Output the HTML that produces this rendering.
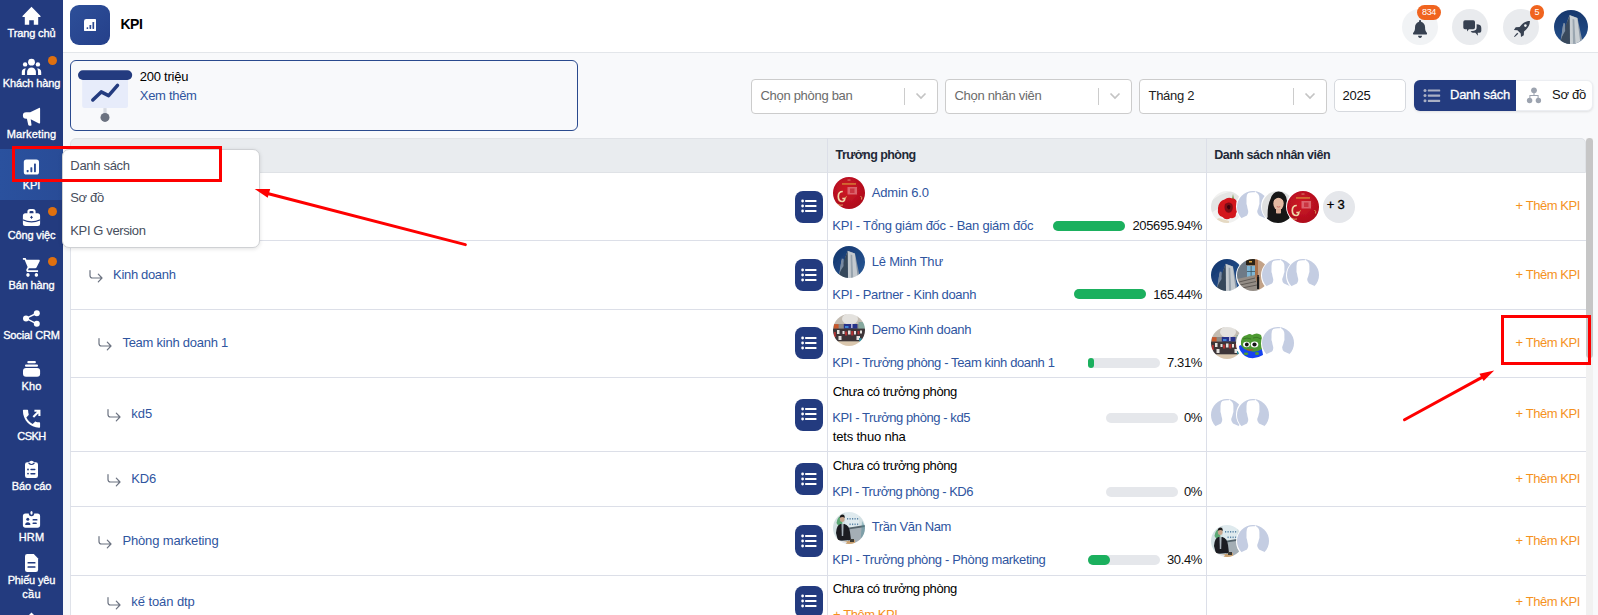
<!DOCTYPE html>
<html lang="vi">
<head>
<meta charset="utf-8">
<title>KPI</title>
<style>
*{box-sizing:border-box;margin:0;padding:0}
html,body{width:1598px;height:615px;overflow:hidden}
body{position:relative;background:#f8f9fb;font-family:"Liberation Sans",sans-serif;font-size:13px;color:#111;letter-spacing:-0.3px}
.abs{position:absolute}
/* sidebar */
#side{position:absolute;left:0;top:0;width:63px;height:615px;background:#233b7f}
.si{position:absolute;left:0;width:63px;text-align:center;color:#fff;font-size:11px;letter-spacing:-0.14px;line-height:14px;white-space:nowrap;-webkit-text-stroke:0.35px #fff}
.si svg{position:absolute;fill:#fff}
.dot{position:absolute;width:9px;height:9px;border-radius:50%;background:#e0700f;left:48px}
#kpiact{position:absolute;left:0;top:149px;width:63px;height:51px;background:linear-gradient(90deg,#2a519e,#294c97)}
/* header */
#hdr{position:absolute;left:63px;top:0;width:1535px;height:53px;background:#fff;border-bottom:1px solid #e3e6ea}
#kpibox{position:absolute;left:70px;top:5px;width:40px;height:40px;border-radius:9px;background:linear-gradient(135deg,#2d4f99,#25408a)}
#kpititle{position:absolute;left:120.5px;top:15px;font-size:14px;font-weight:700;letter-spacing:-0.5px;color:#000;line-height:18px}
.cbtn{position:absolute;top:9px;width:36px;height:36px;border-radius:50%;background:#e9ebee}
.badge{position:absolute;top:5px;height:15px;border-radius:8px;background:#f0641f;color:#fff;font-size:9px;line-height:15px;text-align:center;letter-spacing:-0.4px}
/* banner */
#card{position:absolute;left:70px;top:60px;width:508px;height:71px;border:1px solid #2a4a8e;border-radius:6px;background:#f8f9fb}
/* filters */
.sel{position:absolute;top:79px;width:187px;height:35px;border:1px solid #ccc;border-radius:4px;background:#fff;color:#6b6b6b;font-size:13px;line-height:31px;padding-left:8.500px}
.sel i{position:absolute;right:32px;top:8px;width:1px;height:17px;background:#ccc}
.sel svg{position:absolute;right:10px;top:12px}
/* table */
#thead{position:absolute;left:70px;top:138px;width:1516px;height:35px;background:#e9ecef;border-radius:6px 5px 0 0;border:1px solid #dfe2e6}
.th{position:absolute;top:138px;height:35px;line-height:34px;font-weight:700;font-size:12.5px;letter-spacing:-0.55px;color:#1f2937}
#tbody{position:absolute;left:70px;top:173px;width:1516px;height:442px;background:#fff;border-left:1px solid #dfe2e9}
.hl{position:absolute;left:70px;width:1516px;height:1px;background:#dcdfe8}
.vl{position:absolute;top:138px;width:1px;height:477px;background:#dcdfe8}
.lb{position:absolute;left:795px;width:28px;height:32px;border-radius:8px;background:#233b7f}
.lb svg{position:absolute;left:5.500px;top:8.500px}
.blue{color:#2f559f}
.t{position:absolute;white-space:nowrap;line-height:16px}
.add{position:absolute;left:1515.500px;color:#f5921e;white-space:nowrap;line-height:16px;letter-spacing:-0.42px}
.pb{position:absolute;height:10px;border-radius:5px;background:#e5e7eb;width:72px}
.pb b{position:absolute;left:0;top:0;height:10px;border-radius:5px;background:#1bb05e;display:block}
.pc{position:absolute;right:396px;white-space:nowrap;line-height:16px;color:#111;letter-spacing:-0.35px}
.av{position:absolute;width:32px;height:32px;border-radius:50%;overflow:hidden}
.arr{position:absolute}
/* dropdown */
#menu{position:absolute;left:62px;top:149px;width:198px;height:99px;background:#fff;border:1px solid #cfd1d4;border-radius:7px;box-shadow:0 1px 4px rgba(0,0,0,.12)}
#menu div{position:absolute;left:7.300px;color:#474e5d;font-size:13px;line-height:16px;white-space:nowrap}
.red{position:absolute;border:3px solid #fe0000}
</style>
</head>
<body>
<!-- header -->
<div id="hdr"></div>
<div id="kpibox"></div>
<svg class="abs" style="left:83.600px;top:18.500px" width="12.800" height="12.800" viewBox="0 0 13 13"><rect x="0" y="0" width="13" height="13" rx="2.200" fill="#fff"/><g fill="#2a4890"><rect x="2.600" y="8.300" width="1.700" height="1.900" rx=".5"/><rect x="5.600" y="6" width="1.700" height="4.200" rx=".5"/><rect x="8.600" y="3" width="1.700" height="7.200" rx=".5"/></g></svg>
<div id="kpititle">KPI</div>
<div class="cbtn" style="left:1402px;background:#f1f3f5"></div>
<div class="cbtn" style="left:1452px"></div>
<div class="cbtn" style="left:1503px"></div>
<!-- bell -->
<svg class="abs" style="left:1413px;top:20.100px" width="14.100" height="17.900" viewBox="0 0 448 512" preserveAspectRatio="none"><path fill="#374151" d="M224 0c-17.700 0-32 14.300-32 32V51.200C119 66 64 130.600 64 208v18.800c0 47-17.300 92.400-48.500 127.600l-7.400 8.300c-8.400 9.400-10.400 22.900-5.300 34.400S19.400 416 32 416H416c12.600 0 24-7.400 29.200-18.900s3.100-25-5.300-34.400l-7.400-8.300C401.300 319.200 384 273.900 384 226.800V208c0-77.400-55-142-128-156.800V32c0-17.700-14.300-32-32-32zm45.300 493.300c12-12 18.700-28.300 18.700-45.300H224 160c0 17 6.700 33.300 18.700 45.300s28.300 18.700 45.300 18.700s33.300-6.700 45.300-18.700z"/></svg>
<!-- chat -->
<svg class="abs" style="left:1462px;top:19px" width="21" height="18" viewBox="0 0 21 18"><g fill="#374151"><path d="M3 1.300 H11.300 Q13 1.300 13 3 V8.500 Q13 10.200 11.300 10.200 H6.800 L5.300 12.500 L4.900 10.200 H3 Q1.300 10.200 1.300 8.500 V3 Q1.300 1.300 3 1.300 Z"/><path d="M14.600 5.200 Q16.600 5.200 18.300 6.300 Q19.300 7.200 19.300 9 V12 Q19.300 13.800 17.600 13.800 H15.700 L16 16.800 L13.300 13.800 H10.800 Q9.300 13.600 8.600 12.300 Q12.800 12.200 14 10.800 Q14.900 9.800 14.600 5.200 Z"/></g></svg>
<!-- rocket -->
<svg class="abs" style="left:1512px;top:19px" width="20" height="20" viewBox="0 0 20 20"><g fill="#374151"><path d="M17.900 2.100 C15 1.900 11.500 3.400 9.300 6 L7.600 8 L3.700 8.200 L1.900 11 L5.400 11.300 L8.700 14.600 L9 18.100 L11.800 16.300 L12 12.400 L14 10.700 C16.600 8.500 18.100 5 17.900 2.100 Z"/><path d="M2 17.500 L5.200 13.700 L6.300 14.800 L2.700 18.100 Z" /></g><circle cx="13.400" cy="6.600" r="1.300" fill="#f1f3f5"/></svg>
<div class="badge" style="left:1417px;width:24px">834</div>
<div class="badge" style="left:1529.500px;width:14.500px">5</div>
<!-- user avatar -->
<svg class="abs" style="left:1554px;top:10px" width="34" height="34" viewBox="0 0 34 34"><defs><clipPath id="ua"><circle cx="17" cy="17" r="17"/></clipPath><linearGradient id="sky" x1="0" y1="0" x2="0" y2="1"><stop offset="0" stop-color="#16376c"/><stop offset="1" stop-color="#234f8b"/></linearGradient></defs><g clip-path="url(#ua)"><rect width="34" height="34" fill="url(#sky)"/><path d="M6 34 L9.500 13 L11 13.500 L11.500 21 L13 12 L15.500 5 L23.500 8 L29 34 Z" fill="#8a97a6"/><path d="M16 34 L15.800 5.200 L23.300 8 L26.500 34 Z" fill="#c9cfd3"/><path d="M5.500 34 L13 12 L15.600 6 L16 34 Z" fill="#39495c"/><path d="M8.800 16 L10.800 13.300 L11.200 21 L7.500 27 Z" fill="#7d8fa6"/><path d="M19 34 L18.600 9 L20.300 9.600 L21.500 34 Z" fill="#9aa6b0"/></g></svg>

<!-- banner card -->
<div id="card"></div>
<svg class="abs" style="left:70px;top:60px" width="80" height="70" viewBox="70 60 80 70"><path d="M82.200 78 H128 V105.600 Q128 108.100 125.500 108.100 H84.700 Q82.200 108.100 82.200 105.600 Z" fill="#e7ecfa"/><rect x="78" y="70.200" width="54.200" height="9.800" rx="4.900" fill="#233b7f"/><path d="M92.800 100 L101.200 91.900 L108.600 95.600 L117.500 85.400" fill="none" stroke="#233b7f" stroke-width="3.500" stroke-linecap="round" stroke-linejoin="round"/><rect x="103.400" y="108.100" width="3.200" height="6" fill="#d6dae1"/><circle cx="105" cy="117.400" r="4.500" fill="#6b7280"/></svg>
<div class="t" style="left:139.800px;top:68.500px;color:#000;letter-spacing:-0.250px">200 triệu</div>
<div class="t blue" style="left:139.800px;top:87.700px;letter-spacing:-0.300px">Xem thêm</div>

<!-- filters -->
<div class="sel" style="left:751px">Chọn phòng ban<i></i><svg width="12" height="8" viewBox="0 0 12 8"><path d="M1.500 1.500 L6 6 L10.500 1.500" fill="none" stroke="#c4c4c4" stroke-width="1.700"/></svg></div>
<div class="sel" style="left:945px">Chọn nhân viên<i></i><svg width="12" height="8" viewBox="0 0 12 8"><path d="M1.500 1.500 L6 6 L10.500 1.500" fill="none" stroke="#c4c4c4" stroke-width="1.700"/></svg></div>
<div class="sel" style="left:1139px;width:188px;color:#222">Tháng 2<i></i><svg width="12" height="8" viewBox="0 0 12 8"><path d="M1.500 1.500 L6 6 L10.500 1.500" fill="none" stroke="#c4c4c4" stroke-width="1.700"/></svg></div>
<div class="abs" style="left:1334px;top:79px;width:72px;height:33px;border:1px solid #d6d9de;border-radius:5px;background:#fff;color:#111;line-height:32px;padding-left:7.500px;letter-spacing:-0.200px">2025</div>
<div class="abs" style="left:1414px;top:80px;width:179px;height:31px;border:1px solid #eceef2;border-radius:6px;background:#fff;box-shadow:0 1px 2.500px rgba(0,0,0,.10)"></div>
<div class="abs" style="left:1414px;top:80px;width:102px;height:31px;border-radius:6px 0 0 6px;background:#233b7f"></div>
<svg class="abs" style="left:1423px;top:88px" width="18" height="15" viewBox="0 0 18 15"><g fill="#aab0c4"><circle cx="2" cy="2.400" r="1.500"/><circle cx="2" cy="7.600" r="1.500"/><circle cx="2" cy="12.800" r="1.500"/><rect x="4.800" y="1.400" width="12.400" height="2.100" rx=".6"/><rect x="4.800" y="6.600" width="12.400" height="2.100" rx=".6"/><rect x="4.800" y="11.800" width="12.400" height="2.100" rx=".6"/></g></svg>
<div class="t" style="left:1450px;top:86.500px;color:#fff;-webkit-text-stroke:0.300px #fff;letter-spacing:-0.250px">Danh sách</div>
<svg class="abs" style="left:1526px;top:87px" width="16" height="17" viewBox="0 0 16 17"><g fill="#9ca3af"><circle cx="8" cy="3.300" r="2.900"/><circle cx="3.600" cy="13.500" r="2.700"/><circle cx="12.400" cy="13.500" r="2.700"/><path d="M7.500 6 H8.500 V8 H12.600 V11 H11.600 V9 H4.400 V11 H3.400 V8 H7.500 Z"/></g></svg>
<div class="t" style="left:1552px;top:86.500px;color:#111;letter-spacing:-0.250px">Sơ đồ</div>

<!-- sidebar -->
<div id="side"></div>
<div id="kpiact"></div>
<svg class="abs" style="left:0;top:0" width="63" height="615" viewBox="0 0 63 615">
<g fill="#fff">
<!-- home -->
<path d="M31.5 6.7 L40.5 16.1 V17.1 H38.2 V24.8 H33.8 V20.2 H29.2 V24.8 H24.8 V17.1 H22.5 V16.1 Z"/>
<!-- users -->
<circle cx="31.5" cy="62.2" r="3.4"/><circle cx="25.1" cy="64.4" r="2.2"/><circle cx="37.9" cy="64.4" r="2.2"/>
<path d="M27.1 75 V71.8 A4.4 4.4 0 0 1 35.9 71.8 V75 Z"/>
<path d="M21.8 75 V72 Q21.9 68.6 25.7 68.2 Q24.8 70 24.9 75 Z"/>
<path d="M41.2 75 V72 Q41.1 68.6 37.3 68.2 Q38.2 70 38.1 75 Z"/>
<!-- bullhorn -->
<path d="M40.1 108.7 Q40.1 107.5 39 108 L30.2 112.2 H26.2 A3.3 3.3 0 0 0 26.2 118.8 H26.9 L28.2 124.7 Q28.5 125.8 29.6 125.8 H30.6 Q31.7 125.8 31.5 124.7 L30.7 119.2 L39 123.4 Q40.1 123.9 40.1 122.8 Z"/>
<!-- kpi -->
<rect x="23.8" y="159.4" width="15.2" height="15.2" rx="2.6"/>
<!-- briefcase -->
<path d="M27.4 213.2 V211.6 Q27.4 208.9 30.1 208.9 H32.9 Q35.6 208.9 35.6 211.6 V213.2 H37.6 Q40.1 213.2 40.1 215.7 V223.4 Q40.1 225.9 37.6 225.9 H25.4 Q22.9 225.9 22.9 223.4 V215.7 Q22.9 213.2 25.4 213.2 Z M29.5 213.2 H33.5 V211.9 Q33.5 210.9 32.5 210.9 H30.5 Q29.5 210.9 29.5 211.9 Z"/>
<!-- cart -->
<g transform="translate(22.06,256) scale(0.843,0.945)"><path d="M7 18c-1.1 0-1.99.9-1.99 2S5.9 22 7 22s2-.9 2-2-.9-2-2-2zM1 2v2h2l3.6 7.59-1.35 2.45c-.16.28-.25.61-.25.96 0 1.1.9 2 2 2h12v-2H7.42c-.14 0-.25-.11-.25-.25l.03-.12.9-1.63h7.45c.75 0 1.41-.41 1.75-1.03l3.58-6.49c.08-.14.12-.31.12-.48 0-.55-.45-1-1-1H5.21l-.94-2H1zm16 16c-1.1 0-1.99.9-1.99 2s.89 2 1.99 2 2-.9 2-2-.9-2-2-2z"/></g>
<!-- share -->
<circle cx="26" cy="318.4" r="3"/><circle cx="36.8" cy="313.2" r="3"/><circle cx="36.8" cy="323.8" r="3"/>
<path d="M26 318.4 L36.8 313.2 M26 318.4 L36.8 323.8" stroke="#fff" stroke-width="1.5" fill="none"/>
<!-- kho -->
<rect x="27.3" y="361.1" width="8.6" height="2.1" rx="1"/><rect x="25" y="364.5" width="13" height="2.3" rx="1.1"/><rect x="23" y="367.9" width="17.1" height="8.9" rx="3"/>
<!-- phone -->
<g transform="translate(20.03,406.8) scale(0.955,0.994)"><path d="M20 15.5c-1.25 0-2.45-.2-3.57-.57-.35-.11-.74-.03-1.02.24l-2.2 2.2c-2.83-1.44-5.15-3.75-6.59-6.59l2.2-2.21c.28-.26.36-.65.25-1C8.7 6.45 8.5 5.25 8.5 4c0-.55-.45-1-1-1H4c-.55 0-1 .45-1 1 0 9.390 7.610 17 17 17 .55 0 1-.45 1-1v-3.500c0-.55-.45-1-1-1z"/></g>
<path d="M33.300 417 L39 411.200 M34.400 410.800 H39.400 V416" stroke="#fff" stroke-width="2.100" fill="none"/>
<!-- clipboard -->
<path d="M27.2 462.3 H29 Q29.3 460.7 31.5 460.7 Q33.7 460.7 34 462.3 H35.8 Q38 462.3 38 464.5 V475.8 Q38 478 35.8 478 H27.2 Q25 478 25 475.8 V464.5 Q25 462.3 27.2 462.3 Z"/>
<!-- hrm -->
<rect x="22.9" y="513.4" width="17.2" height="14.3" rx="2.6"/>
<!-- file -->
<path d="M27.2 554 H33.8 L38.1 558.6 V569.8 Q38.1 572 35.9 572 H27.2 Q25 572 25 569.8 V556.2 Q25 554 27.2 554 Z"/>
<!-- next icon tip -->
<path d="M31.5 612.6 L34 615 H29 Z"/>
</g>
<g fill="#233b7f">
<!-- kpi bars -->
<g fill="#2b4b95"><rect x="26.7" y="170" width="1.9" height="2.2" rx=".6"/><rect x="30.4" y="167.2" width="1.9" height="5" rx=".6"/><rect x="34" y="163.4" width="1.9" height="8.8" rx=".6"/></g>
<!-- briefcase details -->
<path d="M22.9 219.2 Q31.5 223.4 40.1 219.2 V220.5 Q31.5 224.7 22.9 220.500 Z"/>
<path d="M31.5 215.900 V218.700 M30.100 217.300 H32.900" stroke="#233b7f" stroke-width="1" fill="none"/>
<!-- clipboard details -->
<path d="M28.6 463 Q31.5 466 34.4 463" stroke="#233b7f" stroke-width="1.1" fill="none"/>
<rect x="29.900" y="461.700" width="3.200" height="1.200" rx=".6" fill="#233b7f" opacity="0"/>
<circle cx="28" cy="469.500" r=".9"/><rect x="30.300" y="468.800" width="5.200" height="1.500" rx=".7"/>
<circle cx="28" cy="473.600" r=".9"/><rect x="30.300" y="472.900" width="5.200" height="1.500" rx=".7"/>
<!-- hrm details -->
<circle cx="31.500" cy="513.600" r="2.700"/>
<circle cx="27.800" cy="519.300" r="1.500"/><path d="M25.200 525 Q25.200 522.300 27.800 522.300 Q30.400 522.300 30.400 525 Z"/>
<rect x="32.500" y="519.100" width="5" height="1.500" rx=".7"/><rect x="32.500" y="522.600" width="4.300" height="1.500" rx=".7"/>
<!-- file details -->
<rect x="27.500" y="562" width="8" height="1.500" rx=".5"/><rect x="27.500" y="566.300" width="8" height="1.500" rx=".5"/>
</g>
<ellipse cx="31.500" cy="512.800" rx="1.100" ry="1.900" fill="#fff"/>
</svg>
<div class="dot" style="top:56px"></div>
<div class="dot" style="top:207px"></div>
<div class="dot" style="top:257px"></div>
<div class="si" style="top:26px">Trang chủ</div>
<div class="si" style="top:76px">Khách hàng</div>
<div class="si" style="top:127px;letter-spacing:.15px">Marketing</div>
<div class="si" style="top:178px">KPI</div>
<div class="si" style="top:227.500px">Công việc</div>
<div class="si" style="top:278px">Bán hàng</div>
<div class="si" style="top:328px">Social CRM</div>
<div class="si" style="top:379px;letter-spacing:.2px">Kho</div>
<div class="si" style="top:429px;letter-spacing:-0.500px">CSKH</div>
<div class="si" style="top:479px">Báo cáo</div>
<div class="si" style="top:530px;letter-spacing:.2px">HRM</div>
<div class="si" style="top:573px">Phiếu yêu</div>
<div class="si" style="top:587.300px;letter-spacing:.3px">cầu</div>

<!-- table -->
<svg width="0" height="0" style="position:absolute">
<defs>
<clipPath id="c32"><circle cx="16" cy="16" r="16"/></clipPath>
<filter id="bl" x="-10%" y="-10%" width="120%" height="120%"><feGaussianBlur stdDeviation="0.45"/></filter>
<radialGradient id="rg" cx=".45" cy=".4" r=".7"><stop offset="0" stop-color="#cf1626"/><stop offset="1" stop-color="#a90d1b"/></radialGradient>
<linearGradient id="sk2" x1="0" y1="0" x2="1" y2="1"><stop offset="0" stop-color="#12336a"/><stop offset="1" stop-color="#2a5a98"/></linearGradient>
<symbol id="a-red" viewBox="0 0 32 32"><g clip-path="url(#c32)"><g filter="url(#bl)"><rect width="32" height="32" fill="url(#rg)"/>
<rect x="9" y="6.300" width="14" height="1.300" fill="#d9a13c" opacity=".85"/><rect x="14.500" y="2.600" width="3" height=".9" fill="#e8c9a0" opacity=".7"/>
<rect x="14.500" y="10" width="9.500" height="7.500" fill="#e27f86" opacity=".75"/><rect x="17" y="11.500" width="4.500" height="4.500" fill="#c62a37" opacity=".8"/>
<path d="M9.800 14.500 Q5.300 14.500 5.300 19.500 Q5.300 24.500 9.500 24.500 Q11.500 24.500 11.800 21.500 H9.300" fill="none" stroke="#f0d9a8" stroke-width="1.700"/>
<path d="M11.500 21 L14 19.500 M27.500 19 Q29.500 20.500 28.500 22.500 M4 27 Q7 29 10 28" stroke="#e5b96a" stroke-width="1" fill="none" opacity=".8"/></g></g></symbol>
<symbol id="a-bld" viewBox="0 0 32 32"><g clip-path="url(#c32)"><g filter="url(#bl)"><rect width="32" height="32" fill="url(#sk2)"/>
<path d="M5.500 32 L8.800 12.500 L10.400 13 L10.800 20 L12.500 11 L14.600 4.800 L22 7.600 L27 32 Z" fill="#8795a5"/><path d="M15 32 L14.800 5 L21.800 7.600 L24.800 32 Z" fill="#c4cacf"/><path d="M5 32 L12.200 11.500 L14.600 5.600 L15 32 Z" fill="#34465a"/><path d="M8.200 15 L10.200 12.600 L10.600 20 L7 25.500 Z" fill="#7889a0"/><path d="M18 32 L17.600 8.500 L19.200 9 L20.200 32 Z" fill="#98a4ae"/></g></g></symbol>
<symbol id="a-grp" viewBox="0 0 32 32"><g clip-path="url(#c32)"><g filter="url(#bl)"><rect width="32" height="32" fill="#cbc5bc"/>
<rect x="0" y="0" width="32" height="10.500" fill="#c3bcb2"/><ellipse cx="17" cy="5" rx="8" ry="5.500" fill="#ecebe9" opacity=".8"/>
<rect x="0" y="10" width="32" height="5" fill="#8f8b86"/><rect x="10.800" y="10" width="13.600" height="4.800" fill="#26308a"/><rect x="12" y="12" width="3.500" height="2" fill="#3f86d6"/><rect x="18" y="9" width="1.600" height="5" fill="#d9d4e6" opacity=".8"/><rect x=".8" y="10.200" width="4.800" height="4.600" fill="#c9582b"/><rect x="25.500" y="8" width="6.500" height="7" fill="#86a89e"/>
<rect x="0" y="14.600" width="32" height="13" fill="#3d3638"/>
<g fill="#e6e3e0"><rect x="4" y="16" width="2.500" height="4"/><rect x="9.500" y="17" width="2" height="3"/><rect x="15" y="16.500" width="2.500" height="4"/><rect x="21" y="17" width="2" height="3.500"/><rect x="5.500" y="22" width="3" height="4"/><rect x="23.500" y="22" width="3.500" height="4"/><rect x="27" y="16.500" width="2" height="3"/></g>
<g fill="#b03030"><rect x="12" y="17.500" width="2.200" height="4"/><rect x="18.200" y="17" width="2.200" height="4.500"/><rect x="24.500" y="17" width="2" height="3.500"/><rect x="1" y="18" width="1.800" height="5"/></g>
<rect x="26" y="24" width="2.500" height="3.500" fill="#2d8a9a"/>
<rect x="0" y="27.500" width="32" height="4.500" fill="#dac7ae"/></g></g></symbol>
<symbol id="a-nam" viewBox="0 0 32 32"><g clip-path="url(#c32)"><g filter="url(#bl)"><rect width="32" height="32" fill="#d3e0e3"/>
<rect x="12" y="0" width="14" height="15" fill="#dfeaee"/><g fill="#5d86a8"><rect x="14" y="6" width="1.200" height="1.600"/><rect x="16.500" y="6" width="1.200" height="1.600"/><rect x="19" y="6" width="1.200" height="1.600"/><rect x="21.500" y="6" width="1.200" height="1.600"/><rect x="24" y="6" width="1.200" height="1.600"/><rect x="16.500" y="11.500" width="1.200" height="1.600"/><rect x="19" y="11.500" width="1.200" height="1.600"/><rect x="21.500" y="11.500" width="1.200" height="1.600"/><rect x="24" y="11.500" width="1.200" height="1.600"/></g>
<path d="M3.500 11 Q4.500 4.500 8 4 L9.500 11.500 L5.500 14 Z" fill="#3f9a58" opacity=".8"/>
<path d="M15 16.500 L32 13.500 V32 H15 Z" fill="#a4aeb5"/><path d="M15 15.800 L32 13 V15 L15 17.500 Z" fill="#55646c"/>
<path d="M29 9 L32 14 V30 H27.500 Z" fill="#4f8f98" opacity=".45"/>
<ellipse cx="9.200" cy="7" rx="2.400" ry="3" fill="#c9a58c"/><path d="M6.700 5.800 Q7 2.500 9.500 2.500 Q12 2.700 11.700 6 Q10 4.300 6.700 5.800 Z" fill="#1c1a1c"/>
<path d="M3 21 Q3.500 13 7.500 12 L11.500 12 Q16 13 17 20 L18 28 L5 29 Z" fill="#1b1d24"/><path d="M8.500 12 L10.600 12 L10.200 24 L8.800 24 Z" fill="#a8b0b8"/>
<path d="M0 24 L8 30 L22 28 L22 34 L0 34 Z" fill="#c9a070"/><path d="M4 28 L14 30 L12 33 L2 31 Z" fill="#e3e8ee"/><rect x="17" y="27" width="4" height="3" fill="#3c3a36"/></g></g></symbol>
<symbol id="a-rose" viewBox="0 0 32 32"><g clip-path="url(#c32)"><g filter="url(#bl)"><rect width="32" height="32" fill="#f1f1f0"/>
<path d="M0 10 Q10 2 22 0 L32 0 V8 Q18 10 0 22 Z" fill="#e4e5e4"/><path d="M6 32 Q4 28 8 27 L18 30 V32 Z" fill="#e2d3b8" opacity=".8"/>
<path d="M21 9 L22 3 L23 9 Z" fill="#5d8a32"/>
<path d="M7 17 Q8 9.500 13.500 8.500 Q17 5.500 21.500 7.500 Q26 7.500 26 13 Q28 18.500 25 22.500 Q25 28 19.500 27 Q15 30 11.500 26 Q6 25 7 17 Z" fill="#d3121d"/>
<path d="M14 13 Q18 10 21 13 Q23 17 20 21 Q16 23 14 19 Q13 16 14 13 Z" fill="#7e0a12"/><path d="M16 15 Q18 13 19.500 15.500 Q19.500 18 17.500 18.500 Q15.500 17.500 16 15 Z" fill="#3e0508"/></g></g></symbol>
<symbol id="a-girl" viewBox="0 0 32 32"><g clip-path="url(#c32)"><g filter="url(#bl)"><rect width="32" height="32" fill="#dfe0e0"/>
<path d="M6 32 Q4.500 16 8.500 8 Q11 0 17 .5 Q24 1 25 10 Q27.500 20 27 32 Z" fill="#141314"/>
<ellipse cx="16.500" cy="12.500" rx="5.200" ry="6.600" fill="#e3b9a2"/><path d="M10.600 11 Q11.500 4 17 4.500 Q22 5 22.300 11 Q19 6 15 7 Q12 8 10.600 11 Z" fill="#141314"/>
<rect x="14" y="18" width="5" height="4.500" fill="#dcae97"/><path d="M14.800 15.600 Q16.500 16.600 18.200 15.600" stroke="#c4655f" stroke-width=".9" fill="none"/>
<path d="M3 32 Q5 23 13.500 22 Q16.500 24.500 19.500 22 Q28 23 30 32 Z" fill="#161517"/></g></g></symbol>
<symbol id="a-stair" viewBox="0 0 32 32"><g clip-path="url(#c32)"><g filter="url(#bl)"><rect width="32" height="32" fill="#8f8479"/>
<rect x="0" y="0" width="11" height="20" fill="#6e7a86"/><rect x="9" y="0" width="9" height="6" fill="#2c2118"/><rect x="12" y="2" width="3" height="1.500" fill="#d9a441"/>
<rect x="10" y="7" width="8" height="11" fill="#7fb7d6"/><rect x="13.700" y="7" width=".8" height="11" fill="#3d5563"/><rect x="10" y="12" width="8" height=".8" fill="#3d5563"/>
<rect x="18" y="0" width="3" height="24" fill="#a9714b"/><rect x="21" y="0" width="11" height="32" fill="#c2a288"/>
<path d="M0 20 L18 16 L22 32 L0 32 Z" fill="#948d86"/><path d="M2 23 L18 19 M3 26 L19 22.500 M5 29 L20 26" stroke="#5f5a55" stroke-width="1"/>
<rect x="20" y="18" width="2.200" height="12" fill="#1d1a1b"/><circle cx="21.100" cy="17" r="1.100" fill="#2a2224"/></g></g></symbol>
<symbol id="a-pepe" viewBox="0 0 32 32"><g clip-path="url(#c32)"><g filter="url(#bl)"><rect width="32" height="32" fill="#fff"/>
<path d="M2 19 Q2 24 8 29 Q16 34 26 28 L25 22 L14 24 L4 18 Z" fill="#1342f0"/>
<path d="M4 18 Q3 9 10 8 Q13 6 15 8 Q20 5 24 8 Q26 13 25 22 Q19 26 13 24 Q6 23 4 18 Z" fill="#4e9a33"/>
<path d="M6 12 Q10 10 14 12 M16 11 Q20 9 24 12" stroke="#3a7a25" stroke-width="1" fill="none"/>
<ellipse cx="9.500" cy="17.500" rx="3.400" ry="2.800" fill="#fff"/><ellipse cx="17.500" cy="17.500" rx="3.800" ry="3" fill="#fff"/>
<circle cx="9.800" cy="17.500" r="1.900" fill="#151515"/><circle cx="17.500" cy="17.500" r="2.100" fill="#151515"/>
<path d="M10 22.500 Q13 24 16 22.500" stroke="#b8452b" stroke-width="1.100" fill="none"/>
<ellipse cx="9" cy="26.800" rx="2.300" ry="1.400" fill="#4e9a33"/><ellipse cx="20" cy="26.600" rx="2" ry="1.500" fill="#4e9a33"/></g></g></symbol>
<symbol id="a-ph" viewBox="0 0 32 32"><g clip-path="url(#c32)"><rect width="32" height="32" fill="#fff"/><rect width="32" height="27.300" fill="#c4cde2"/>
<path d="M11.300 2 Q9.500 3.200 9.500 7 V11.300 Q9.200 13 10 14.600 Q10.400 17.500 11.200 20 Q11.600 22.600 10 24.600 L4.200 27.300 L0 27.300 V32 H32 V27.300 L28.200 27.300 L22 24.600 Q20 22.600 20.200 20 Q21.500 17 21.900 14.600 Q22.700 13 22.400 11.300 V7 Q22.400 3 19.300 1.500 L18.600 0 L17.800 1.300 Q14 .9 11.300 2 Z" fill="#fff"/></g></symbol>
<symbol id="i-list" viewBox="0 0 16 14"><g fill="#fff"><circle cx="1.600" cy="2" r="1.400"/><circle cx="1.600" cy="7" r="1.400"/><circle cx="1.600" cy="12" r="1.400"/><rect x="4" y="1" width="11.600" height="2" rx=".8"/><rect x="4" y="6" width="11.600" height="2" rx=".8"/><rect x="4" y="11" width="11.600" height="2" rx=".8"/></g></symbol>
<symbol id="i-sub" viewBox="0 0 14 13"><path d="M1 .6 V5.500 Q1 8 3.500 8 H12.600 M9.300 4.200 L13 8 L9.300 11.800" fill="none" stroke="#6b7280" stroke-width="1.200" stroke-linecap="round" stroke-linejoin="round"/></symbol>
</defs></svg>

<div id="thead"></div>
<div id="tbody"></div>
<div class="hl" style="top:240px"></div>
<div class="hl" style="top:309px"></div>
<div class="hl" style="top:377px"></div>
<div class="hl" style="top:451px"></div>
<div class="hl" style="top:506px"></div>
<div class="hl" style="top:575px"></div>
<div class="vl" style="left:827px"></div><div class="vl" style="left:1206px"></div>
<div class="th" style="left:835.500px">Trưởng phòng</div><div class="th" style="left:1214.200px;letter-spacing:-0.480px">Danh sách nhân viên</div>
<div class="lb" style="top:190.7px"><svg width="16" height="14"><use href="#i-list"/></svg></div>
<svg class="abs" style="left:833px;top:177px" width="32" height="32"><use href="#a-red"/></svg>
<div class="t blue" style="left:871.700px;top:184.7px;letter-spacing:-0.162px">Admin 6.0</div>
<div class="t blue" style="left:832.300px;top:218.2px;letter-spacing:-0.248px">KPI - Tổng giám đốc - Ban giám đốc</div>
<div class="pb" style="left:1053px;top:220.8px"><b style="width:72px"></b></div>
<div class="pc" style="top:218.2px">205695.94%</div>
<svg class="abs" style="left:1211px;top:190.8px" width="32" height="32"><use href="#a-rose"/></svg>
<div class="abs" style="left:1235.5px;top:189.3px;width:35px;height:35px;border-radius:50%;background:#fff"></div><svg class="abs" style="left:1237px;top:190.8px" width="32" height="32"><use href="#a-ph"/></svg>
<div class="abs" style="left:1260.5px;top:189.3px;width:35px;height:35px;border-radius:50%;background:#fff"></div><svg class="abs" style="left:1262px;top:190.8px" width="32" height="32"><use href="#a-girl"/></svg>
<div class="abs" style="left:1285.5px;top:189.3px;width:35px;height:35px;border-radius:50%;background:#fff"></div><svg class="abs" style="left:1287px;top:190.8px" width="32" height="32"><use href="#a-red"/></svg>
<div class="abs" style="left:1323px;top:190.5px;width:32px;height:32px;border-radius:50%;background:#e5e7eb;text-align:left;padding-left:3.800px;line-height:27.500px;font-size:13px;color:#000;-webkit-text-stroke:0.300px #000;letter-spacing:-0.300px">+ 3</div>
<div class="add" style="top:197.5px">+ Thêm KPI</div>
<div class="lb" style="top:259px"><svg width="16" height="14"><use href="#i-list"/></svg></div>
<svg class="abs" style="left:88.8px;top:270px" width="14" height="13"><use href="#i-sub"/></svg>
<div class="t blue" style="left:113.1px;top:266.5px;letter-spacing:-0.330px">Kinh doanh</div>
<svg class="abs" style="left:833px;top:246px" width="32" height="32"><use href="#a-bld"/></svg>
<div class="t blue" style="left:871.700px;top:253.7px;letter-spacing:-0.210px">Lê Minh Thư</div>
<div class="t blue" style="left:832.300px;top:287.3px;letter-spacing:-0.336px">KPI - Partner - Kinh doanh</div>
<div class="pb" style="left:1073.8px;top:289px"><b style="width:72px"></b></div>
<div class="pc" style="top:287.3px">165.44%</div>
<svg class="abs" style="left:1211px;top:259px" width="32" height="32"><use href="#a-bld"/></svg>
<div class="abs" style="left:1235.5px;top:257.5px;width:35px;height:35px;border-radius:50%;background:#fff"></div><svg class="abs" style="left:1237px;top:259px" width="32" height="32"><use href="#a-stair"/></svg>
<div class="abs" style="left:1260.5px;top:257.5px;width:35px;height:35px;border-radius:50%;background:#fff"></div><svg class="abs" style="left:1262px;top:259px" width="32" height="32"><use href="#a-ph"/></svg>
<div class="abs" style="left:1285.5px;top:257.5px;width:35px;height:35px;border-radius:50%;background:#fff"></div><svg class="abs" style="left:1287px;top:259px" width="32" height="32"><use href="#a-ph"/></svg>
<div class="add" style="top:266.8px">+ Thêm KPI</div>
<div class="lb" style="top:327.4px"><svg width="16" height="14"><use href="#i-list"/></svg></div>
<svg class="abs" style="left:98.1px;top:338px" width="14" height="13"><use href="#i-sub"/></svg>
<div class="t blue" style="left:122.39999999999999px;top:334.5px;letter-spacing:-0.250px">Team kinh doanh 1</div>
<svg class="abs" style="left:833px;top:314px" width="32" height="32"><use href="#a-grp"/></svg>
<div class="t blue" style="left:871.700px;top:322.2px;letter-spacing:-0.307px">Demo Kinh doanh</div>
<div class="t blue" style="left:832.300px;top:355px;letter-spacing:-0.381px">KPI - Trưởng phòng - Team kinh doanh 1</div>
<div class="pb" style="left:1087.7px;top:358px"><b style="width:6.5px"></b></div>
<div class="pc" style="top:355px">7.31%</div>
<svg class="abs" style="left:1211px;top:327px" width="32" height="32"><use href="#a-grp"/></svg>
<div class="abs" style="left:1235.5px;top:325.5px;width:35px;height:35px;border-radius:50%;background:#fff"></div><svg class="abs" style="left:1237px;top:327px" width="32" height="32"><use href="#a-pepe"/></svg>
<div class="abs" style="left:1260.5px;top:325.5px;width:35px;height:35px;border-radius:50%;background:#fff"></div><svg class="abs" style="left:1262px;top:327px" width="32" height="32"><use href="#a-ph"/></svg>
<div class="add" style="top:334.8px">+ Thêm KPI</div>
<div class="lb" style="top:398.9px"><svg width="16" height="14"><use href="#i-list"/></svg></div>
<svg class="abs" style="left:107.1px;top:409px" width="14" height="13"><use href="#i-sub"/></svg>
<div class="t blue" style="left:131.29999999999998px;top:405.5px;letter-spacing:0.000px">kd5</div>
<div class="t" style="left:832.700px;top:384.1px;color:#000;letter-spacing:-0.442px">Chưa có trưởng phòng</div>
<div class="t blue" style="left:832.300px;top:410.1px;letter-spacing:-0.430px">KPI - Trưởng phòng - kd5</div>
<div class="pb" style="left:1106.2px;top:413px"></div>
<div class="pc" style="top:410.1px">0%</div>
<div class="t" style="left:832.700px;top:428.6px;color:#000;letter-spacing:-0.167px">tets thuo nha</div>
<svg class="abs" style="left:1211px;top:398.9px" width="32" height="32"><use href="#a-ph"/></svg>
<div class="abs" style="left:1235.5px;top:397.4px;width:35px;height:35px;border-radius:50%;background:#fff"></div><svg class="abs" style="left:1237px;top:398.9px" width="32" height="32"><use href="#a-ph"/></svg>
<div class="add" style="top:405.8px">+ Thêm KPI</div>
<div class="lb" style="top:463px"><svg width="16" height="14"><use href="#i-list"/></svg></div>
<svg class="abs" style="left:107.1px;top:474px" width="14" height="13"><use href="#i-sub"/></svg>
<div class="t blue" style="left:131.29999999999998px;top:470.5px;letter-spacing:-0.200px">KD6</div>
<div class="t" style="left:832.700px;top:458.3px;color:#000;letter-spacing:-0.442px">Chưa có trưởng phòng</div>
<div class="t blue" style="left:832.300px;top:484.1px;letter-spacing:-0.487px">KPI - Trưởng phòng - KD6</div>
<div class="pb" style="left:1106.2px;top:487px"></div>
<div class="pc" style="top:484.1px">0%</div>
<div class="add" style="top:470.8px">+ Thêm KPI</div>
<div class="lb" style="top:525px"><svg width="16" height="14"><use href="#i-list"/></svg></div>
<svg class="abs" style="left:98.1px;top:536px" width="14" height="13"><use href="#i-sub"/></svg>
<div class="t blue" style="left:122.39999999999999px;top:532.5px;letter-spacing:-0.143px">Phòng marketing</div>
<svg class="abs" style="left:833px;top:512px" width="32" height="32"><use href="#a-nam"/></svg>
<div class="t blue" style="left:871.700px;top:518.7px;letter-spacing:-0.400px">Trần Văn Nam</div>
<div class="t blue" style="left:832.300px;top:551.8px;letter-spacing:-0.337px">KPI - Trưởng phòng - Phòng marketing</div>
<div class="pb" style="left:1087.7px;top:555px"><b style="width:22.68px"></b></div>
<div class="pc" style="top:551.8px">30.4%</div>
<svg class="abs" style="left:1211px;top:525.2px" width="32" height="32"><use href="#a-nam"/></svg>
<div class="abs" style="left:1235.5px;top:523.7px;width:35px;height:35px;border-radius:50%;background:#fff"></div><svg class="abs" style="left:1237px;top:525.2px" width="32" height="32"><use href="#a-ph"/></svg>
<div class="add" style="top:532.8px">+ Thêm KPI</div>
<div class="lb" style="top:585.6px"><svg width="16" height="14"><use href="#i-list"/></svg></div>
<svg class="abs" style="left:107.1px;top:597px" width="14" height="13"><use href="#i-sub"/></svg>
<div class="t blue" style="left:131.29999999999998px;top:593.5px;letter-spacing:-0.080px">kế toán dtp</div>
<div class="t" style="left:832.700px;top:581.2px;color:#000;letter-spacing:-0.442px">Chưa có trưởng phòng</div>
<div class="t" style="left:833px;top:607px;color:#f5921e;letter-spacing:-0.420px">+ Thêm KPI</div>
<div class="add" style="top:593.8px">+ Thêm KPI</div>
<div class="abs" style="left:1586px;top:138px;width:7px;height:477px;background:#f1f1f1"></div>
<div class="abs" style="left:1586px;top:138px;width:7px;height:220px;background:#c6c6c6;border-radius:3.500px"></div>
<div id="menu"><div style="top:7.600px;letter-spacing:-0.300px">Danh sách</div><div style="top:40.400px;letter-spacing:-0.350px">Sơ đồ</div><div style="top:72.600px;letter-spacing:-0.380px">KPI G version</div></div>
<div class="red" style="left:12px;top:146px;width:210px;height:36px"></div>
<div class="red" style="left:1501px;top:315px;width:90px;height:49.500px"></div>
<svg class="abs" style="left:0;top:0;pointer-events:none" width="1598" height="615" viewBox="0 0 1598 615">
<g stroke="#fe0000" stroke-width="3" stroke-linecap="round" fill="#fe0000">
<path d="M465.400 244.600 L268.500 193.800" fill="none"/><path d="M254.700 189.100 L270.200 189 L267.700 197.700 Z" stroke="none"/>
<path d="M1404.500 419.700 L1481.500 377.600" fill="none"/><path d="M1494.200 370.600 L1479.400 373.700 L1483.600 381.100 Z" stroke="none"/>
</g></svg>
</body>
</html>
